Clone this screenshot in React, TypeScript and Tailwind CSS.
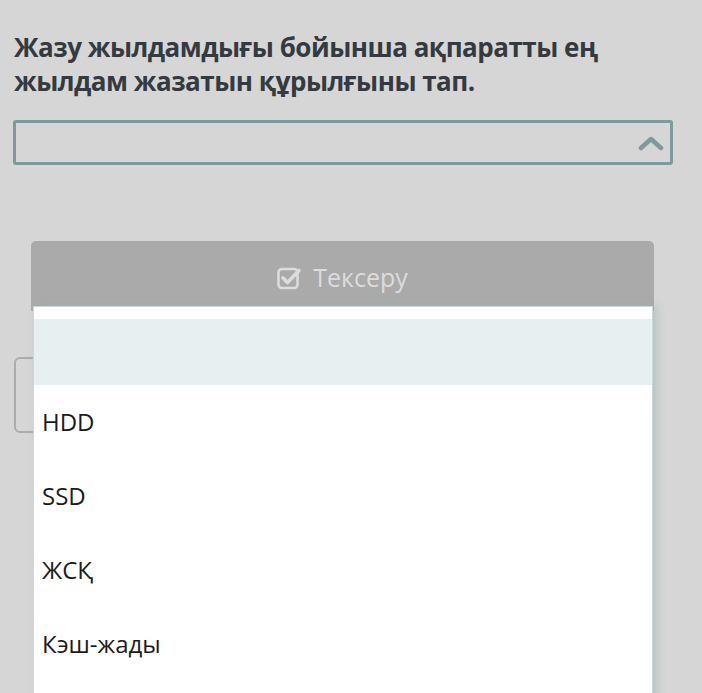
import React from "react";

const options = ["", "HDD", "SSD", "ЖСҚ", "Кэш-жады"];

function ChevronUp() {
  return (
    <svg width="26" height="16" viewBox="0 0 26 16" className="text-[#7d9b9c]">
      <path
        d="M3 13 L13 4 L23 13"
        fill="none"
        stroke="currentColor"
        strokeWidth="4.5"
        strokeLinecap="round"
        strokeLinejoin="round"
      />
    </svg>
  );
}

function CheckSquare() {
  return (
    <svg width="25" height="24" viewBox="0 0 25 24" className="text-[#dcdcdc]">
      <rect x="1.5" y="3" width="19" height="19" rx="3.5" fill="none" stroke="currentColor" strokeWidth="2.6" />
      <path d="M6 12 L10.5 16.5 L22 4.5" fill="none" stroke="currentColor" strokeWidth="3.6" strokeLinecap="round" strokeLinejoin="round" />
    </svg>
  );
}

export default function App() {
  return (
    <div
      className="relative w-[702px] h-[693px] overflow-hidden bg-[#d6d6d6]"
      style={{ fontFamily: '"Open Sans", "Noto Sans", sans-serif' }}
    >
      <div className="pl-[14px] pr-[29px] pt-[30px]">
        {/* Question */}
        <h1 className="text-[26px] leading-[34px] font-bold text-[#343a40] tracking-[-0.5px]">
          Жазу жылдамдығы бойынша ақпаратты ең
          <br />
          жылдам жазатын құрылғыны тап.
        </h1>

        {/* Select */}
        <div className="mt-[22px] -ml-px h-[45px] border-[3px] border-[#7d9b9c] rounded-[3px] flex items-center justify-end pr-[6px]">
          <ChevronUp />
        </div>

        {/* Check button */}
        <div className="mt-[76px] ml-[17px] mr-[19px] h-[70px] rounded-t-[5px] bg-[#aaaaaa] flex items-center justify-center gap-[11px] pt-[4px]">
          <CheckSquare />
          <span className="text-[25px] text-[#dcdcdc]">Тексеру</span>
        </div>

        {/* Box behind dropdown */}
        <div className="mt-[46px] w-[220px] h-[76px] border-2 border-[#a9adad] rounded-[6px]" />
      </div>

      {/* Dropdown */}
      <div className="absolute left-[33px] top-[306px] w-[620px] h-[400px] bg-white border border-[#c9dada] shadow-[4px_0_8px_rgba(150,170,170,0.45)] pt-[12px]">
        {options.map((opt, i) => (
          <div
            key={i}
            className={`flex items-center px-[8px] text-[24px] text-[#1b1b1b] ${
              i === 0 ? "h-[66px] bg-[#e7eff0]" : "h-[74px]"
            }`}
          >
            {opt}
          </div>
        ))}
      </div>
    </div>
  );
}
